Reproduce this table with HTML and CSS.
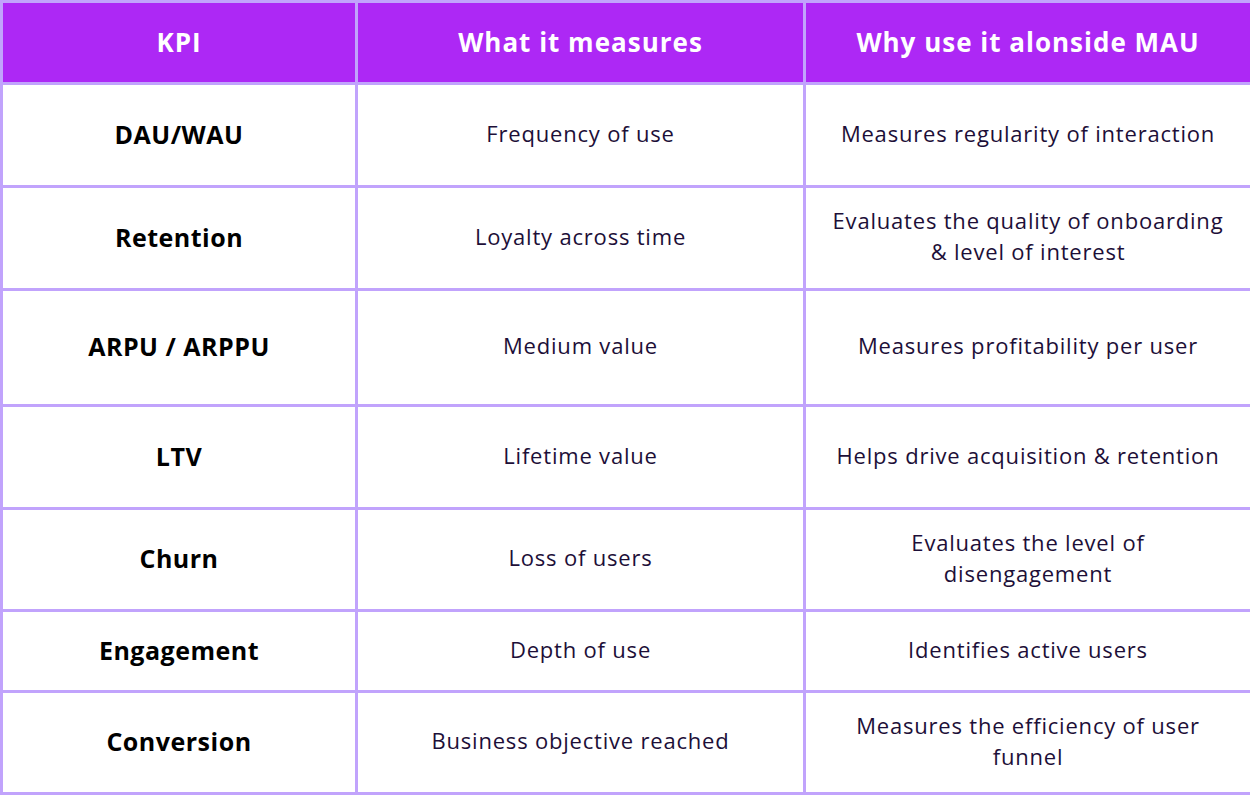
FILE: index.html
```html
<!DOCTYPE html>
<html lang="en">
<head>
<meta charset="utf-8">
<title>KPI table</title>
<link rel="stylesheet" href="styles.css">
</head>
<body>
<table class="kpi-table">
  <colgroup>
    <col class="c1"><col class="c2"><col class="c3">
  </colgroup>
  <thead>
    <tr class="r-head">
      <th>KPI</th>
      <th>What it measures</th>
      <th>Why use it alonside MAU</th>
    </tr>
  </thead>
  <tbody>
    <tr class="r-103">
      <td class="kpi">DAU/WAU</td>
      <td>Frequency of use</td>
      <td>Measures regularity of interaction</td>
    </tr>
    <tr class="r-103">
      <td class="kpi">Retention</td>
      <td>Loyalty across time</td>
      <td>Evaluates the quality of onboarding<br>&amp; level of interest</td>
    </tr>
    <tr class="r-116">
      <td class="kpi">ARPU / ARPPU</td>
      <td>Medium value</td>
      <td>Measures profitability per user</td>
    </tr>
    <tr class="r-103">
      <td class="kpi">LTV</td>
      <td>Lifetime value</td>
      <td>Helps drive acquisition &amp; retention</td>
    </tr>
    <tr class="r-102">
      <td class="kpi">Churn</td>
      <td>Loss of users</td>
      <td>Evaluates the level of<br>disengagement</td>
    </tr>
    <tr class="r-81">
      <td class="kpi">Engagement</td>
      <td>Depth of use</td>
      <td>Identifies active users</td>
    </tr>
    <tr class="r-102">
      <td class="kpi">Conversion</td>
      <td>Business objective reached</td>
      <td>Measures the efficiency of user<br>funnel</td>
    </tr>
  </tbody>
</table>
</body>
</html>
```
FILE: styles.css
```css
html, body {
  margin: 0;
  padding: 0;
  background: #ffffff;
}

.kpi-table {
  width: 1250px;
  border-collapse: collapse;
  table-layout: fixed;
  border: 3px solid #c1a3fc;
  font-family: "Open Sans", "Liberation Sans", sans-serif;
}

.c1 { width: 355px; }
.c2 { width: 448px; }
.c3 { width: 447px; }

.kpi-table th,
.kpi-table td {
  border: 3px solid #c1a3fc;
  text-align: center;
  vertical-align: middle;
  padding: 0 8px;
}

.kpi-table th {
  background: #ad28f5;
  color: #ffffff;
  font-size: 26px;
  font-weight: 700;
  letter-spacing: 1px;
  padding-bottom: 2px;
}

.kpi-table td {
  color: #1d0f38;
  font-size: 22px;
  line-height: 31px;
  letter-spacing: 0.8px;
  padding-bottom: 4px;
}

.kpi-table td.kpi {
  color: #000000;
  font-size: 25px;
  font-weight: 700;
  letter-spacing: 0.5px;
  padding-bottom: 2px;
}

.r-head { height: 82px; }
.r-103 { height: 103px; }
.r-116 { height: 116px; }
.r-102 { height: 102px; }
.r-81 { height: 81px; }
```
